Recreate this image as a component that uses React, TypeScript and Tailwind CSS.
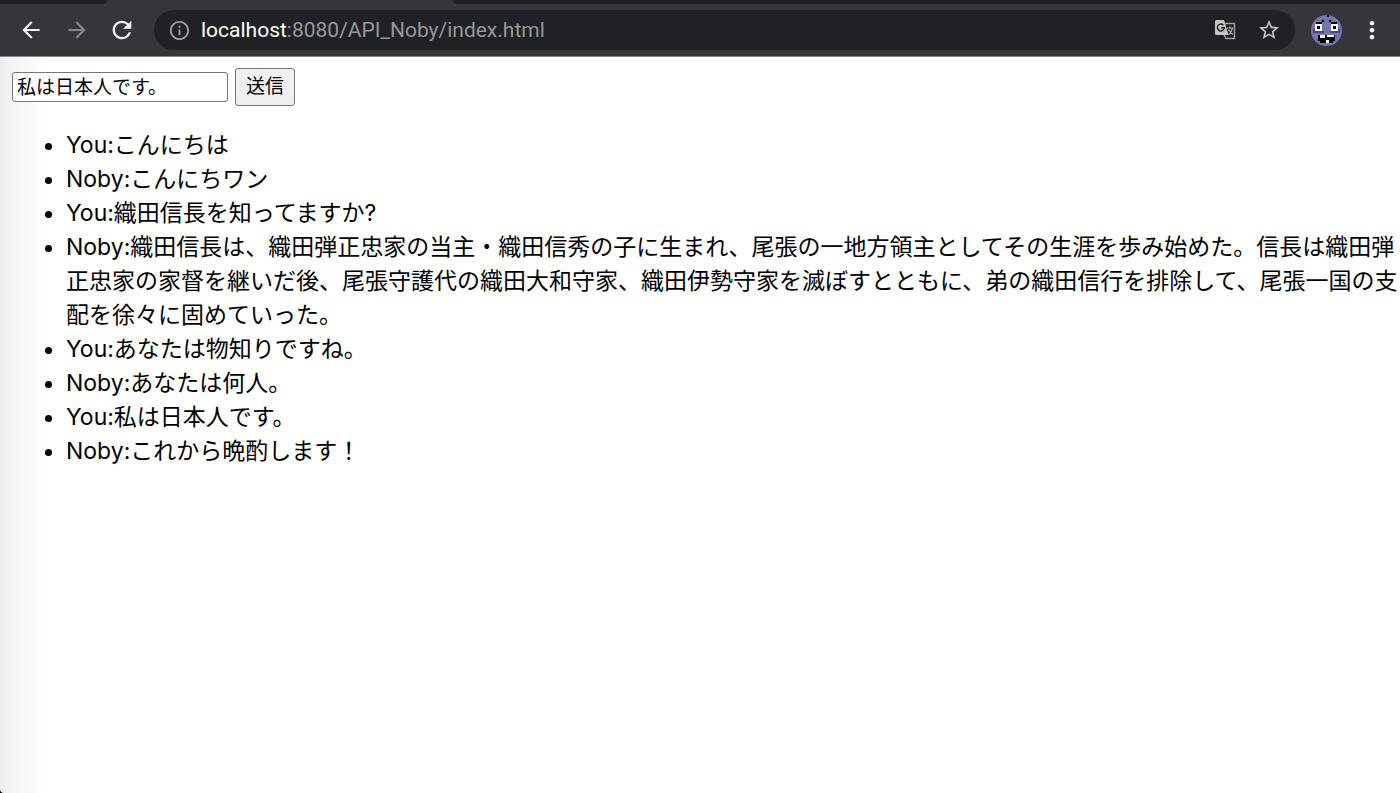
import { MdArrowBack, MdArrowForward, MdInfoOutline, MdMoreVert, MdRefresh, MdStarBorder } from "react-icons/md";

const messages = [
	{ name: "You", text: "こんにちは" },
	{ name: "Noby", text: "こんにちワン" },
	{ name: "You", text: "織田信長を知ってますか?" },
	{
		name: "Noby",
		text: "織田信長は、織田弾正忠家の当主・織田信秀の子に生まれ、尾張の一地方領主としてその生涯を歩み始めた。信長は織田弾正忠家の家督を継いだ後、尾張守護代の織田大和守家、織田伊勢守家を滅ぼすとともに、弟の織田信行を排除して、尾張一国の支配を徐々に固めていった。",
	},
	{ name: "You", text: "あなたは物知りですね。" },
	{ name: "Noby", text: "あなたは何人。" },
	{ name: "You", text: "私は日本人です。" },
	{ name: "Noby", text: "これから晩酌します！" },
];

function TranslateIcon() {
	return (
		<svg width="22" height="22" viewBox="0 0 22 22" fill="none">
			<path d="M9 4.5h10.5v15H11l-2-4" stroke="#9fa0a3" strokeWidth="1.4" />
			<path d="M1.5 1h7.5l4.5 15h-12A1.5 1.5 0 0 1 0 14.5V2.500A1.5 1.5 0 0 1 1.5 1z" fill="#c4c5c7" />
			<path d="M8.3 6.2A3.4 3.4 0 1 0 9.2 8.700H6" stroke="#202124" strokeWidth="1.5" />
			<path d="M12 9h6.500M15 7.500V9M17.500 9c-.5 3-2 5-4 6.500M13.500 10.500c1 2 2.500 4 4.500 5" stroke="#b4b5b7" strokeWidth="1.2" />
		</svg>
	);
}

function Avatar() {
	return (
		<svg width="31" height="31" viewBox="0 0 31 31">
			<circle cx="15.5" cy="15.5" r="15.5" fill="#7376aa" />
			<g shapeRendering="crispEdges">
				<path d="M2 14h2v4H2zM4 16h9v2H4zM19 16h8v2h-8zM27 14h2v4h-2z" fill="#464979" />
				<path d="M16 0h2v2h-2zM11 5h2v2h-2zM18 5h2v2h-2zM5 7h6v2H5zM20 7h6v2h-6z" fill="#000" />
				<path d="M4 9h7v7H4zM20 9h7v7h-7z" fill="#fff" />
				<path d="M6 11h3v3H6zM22 11h3v3h-3z" fill="#000" />
				<path d="M7 20h17v6h-2v2H9v-2H7z" fill="#000" />
				<path d="M9 20h5v3H9zM16 20h7v2h-7zM15 25h3v3h-3z" fill="#fff" />
			</g>
		</svg>
	);
}

function Toolbar() {
	return (
		<header className="bg-[#35363a] border-b border-[#86878a] font-[Roboto,sans-serif]">
			<div className="flex h-1">
				<div className="w-[107px] bg-[#202124] rounded-br" />
				<div className="w-[346px]" />
				<div className="flex-1 bg-[#202124] rounded-bl" />
			</div>
			<div className="flex items-center h-[52px] pl-[18px] pr-[14px]">
				<button aria-label="Back" className="mr-5 text-[#f1f3f4]">
					<MdArrowBack size={26} />
				</button>
				<button aria-label="Forward" className="mr-[18px] text-[#85868a]">
					<MdArrowForward size={26} />
				</button>
				<button aria-label="Reload" className="mr-[18px] text-[#f1f3f4]">
					<MdRefresh size={28} />
				</button>
				<div className="flex flex-1 items-center h-10 rounded-full bg-[#202124] px-[14px]">
					<MdInfoOutline size={23} className="text-[#9aa0a6]" />
					<p className="flex-1 pl-[10px] text-[21px] leading-6 text-[#96989b]">
						<span className="text-white">localhost</span>:8080/API_Noby/index.html
					</p>
					<button aria-label="Translate this page" className="mr-5">
						<TranslateIcon />
					</button>
					<button aria-label="Bookmark this page" className="text-[#c4c5c7]">
						<MdStarBorder size={24} />
					</button>
				</div>
				<button aria-label="Profile" className="mx-4">
					<Avatar />
				</button>
				<button aria-label="Menu" className="text-[#f1f3f4]">
					<MdMoreVert size={28} />
				</button>
			</div>
		</header>
	);
}

export default function App() {
	return (
		<div className="flex min-h-screen flex-col bg-black">
			<Toolbar />
			<main className="flex-1 rounded-bl bg-white bg-[linear-gradient(to_right,#eeeeee,#ffffff_44px)] pl-3 pt-[11px] text-black font-[Inter,'Noto_Sans_CJK_JP',sans-serif]">
				<form className="flex items-center gap-[7px] text-[19px]" onSubmit={(e) => e.preventDefault()}>
					<input
						type="text"
						aria-label="メッセージ"
						defaultValue="私は日本人です。"
						className="h-[30px] w-[216px] rounded-[3px] border border-[#767676] bg-white px-1 pb-1 leading-6"
					/>
					<button className="h-[38px] rounded-[3px] border border-[#767676] bg-[#efefef] px-[10px]">送信</button>
				</form>
				<ul className="mt-[22px] list-disc pl-[54px] text-[23px] leading-[34px]">
					{messages.map((message, i) => (
						<li key={i}>{`${message.name}:${message.text}`}</li>
					))}
				</ul>
			</main>
		</div>
	);
}
